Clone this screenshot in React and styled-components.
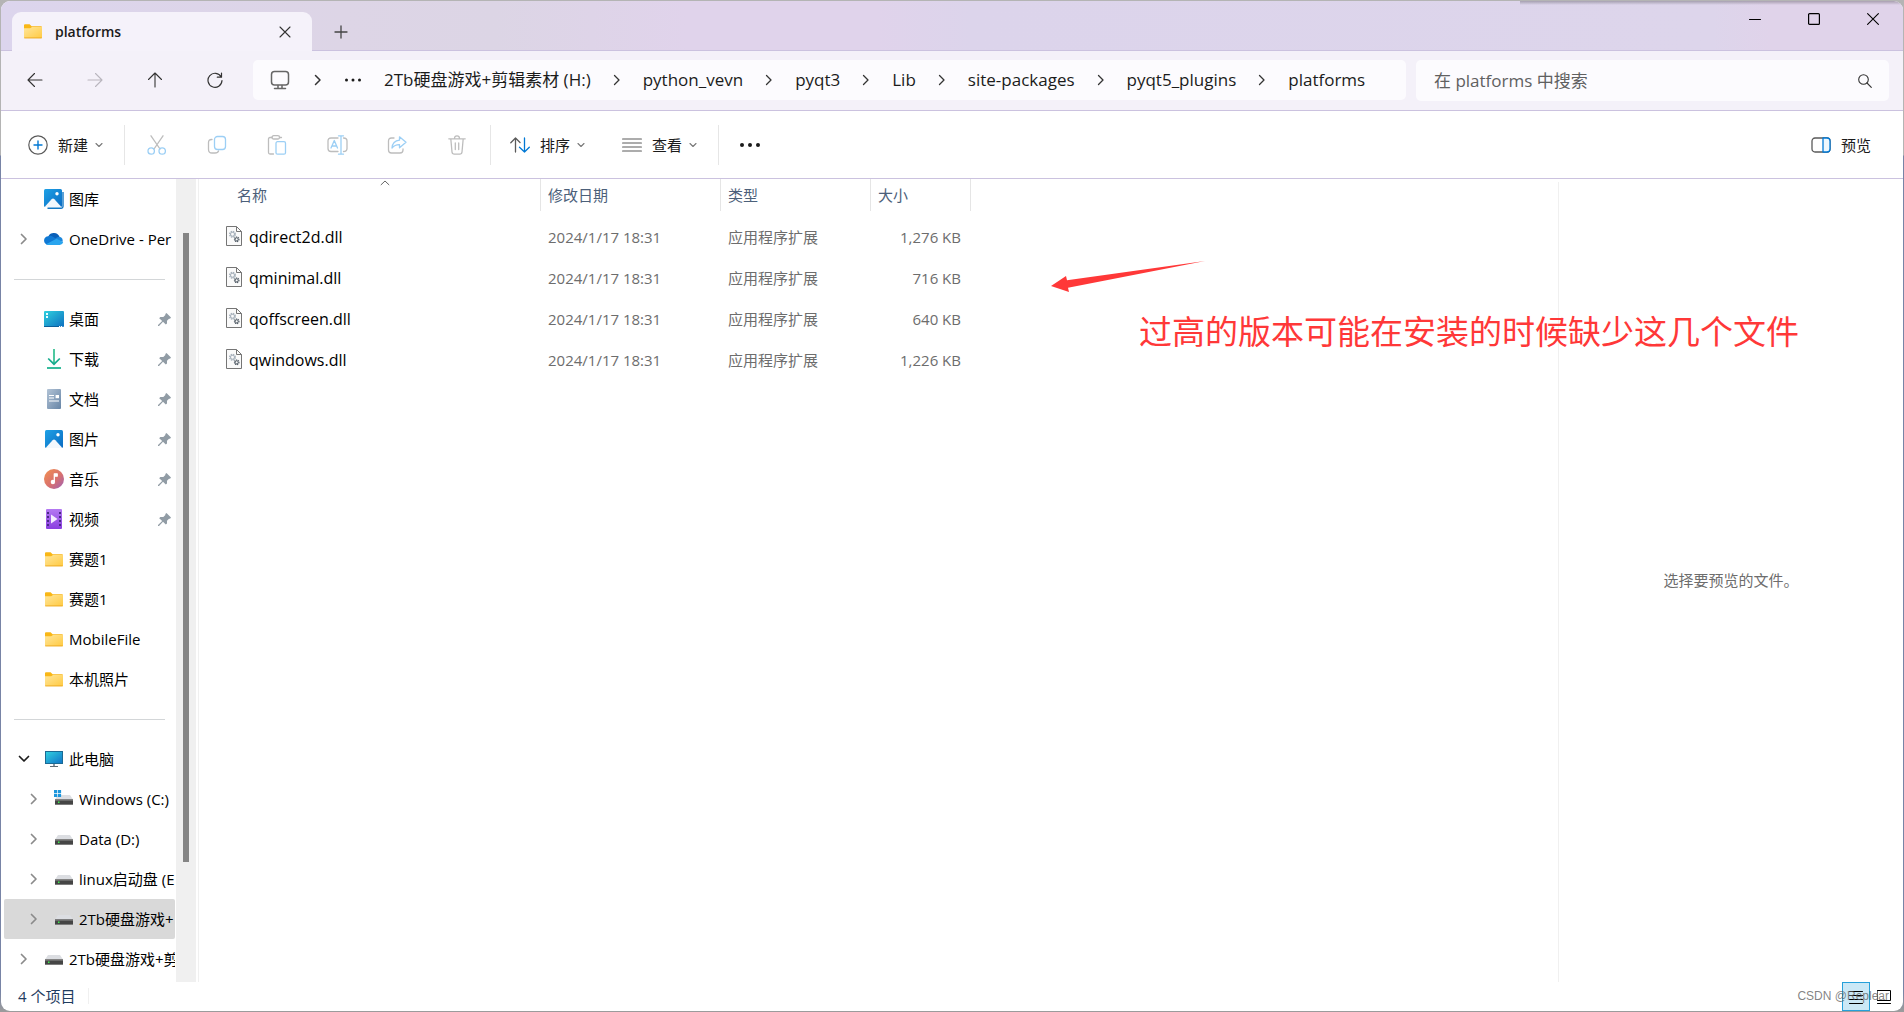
import React from 'react';
import styled, { createGlobalStyle } from 'styled-components';

const GlobalStyle = createGlobalStyle`
  * {
    box-sizing: border-box;
  }
  body {
    margin: 0;
    background: linear-gradient(#b4b4b4 0, #b4b4b4 155px, #7884a6 156px, #7884a6 98%, #9c9c9c 100%);
    font-family: "Open Sans", "Noto Sans CJK SC", sans-serif;
    font-size: 15px;
    line-height: 20px;
    color: #1b1b1b;
  }
  button {
    border: 0;
    padding: 0;
    background: none;
    font: inherit;
    color: inherit;
  }
  a {
    color: inherit;
    text-decoration: none;
  }
  svg {
    display: block;
    flex: none;
  }
`;

const Frame = styled.div`
  min-height: 100vh;
  display: flex;
  padding: 1px;
`;

const Window = styled.div`
  position: relative;
  flex: 1;
  min-width: 0;
  display: flex;
  flex-direction: column;
  background: #fff;
  border-radius: 9px;
  overflow: hidden;
`;

/* ---------- title bar ---------- */

const TitleBar = styled.header`
  display: flex;
  height: 50px;
  padding: 0 1px 0 11px;
  border-bottom: 1px solid #cbc2df;
  background:
    linear-gradient(rgba(0, 0, 0, 0.25), transparent) right top / 383px 4px no-repeat,
    linear-gradient(90deg, #dcd5ed 0%, #ddd5e6 18%, #dcd5e5 26%, #e0d3eb 36%, #e0d3eb 46%, #dcd4eb 51%, #ddd5eb 90%, #e0d3ea 93%);
`;

const Tab = styled.div`
  display: flex;
  align-items: center;
  width: 300px;
  height: 39px;
  margin-top: 11px;
  padding: 0 20px 0 12px;
  border-radius: 9px 9px 0 0;
  background: #f5f2fa;
`;

const TabTitle = styled.span`
  flex: 1;
  margin-left: 13px;
  font-size: 14px;
  font-weight: 600;
`;

const NewTab = styled.button`
  display: flex;
  margin: 24px 0 0 22px;
  height: 14px;
`;

const WindowButtons = styled.div`
  display: flex;
  margin-left: auto;
`;

const WindowButton = styled.button`
  display: flex;
  align-items: center;
  justify-content: center;
  width: 59px;
  height: 36px;
`;

/* ---------- navigation row ---------- */

const NavBar = styled.nav`
  display: flex;
  height: 60px;
  padding: 9px 14px 0 4px;
  background: #f4f1f9;
  border-bottom: 1px solid #cbc2df;
`;

const NavButton = styled.button`
  display: flex;
  align-items: center;
  justify-content: center;
  width: 60px;
  height: 40px;
  color: ${(p) => (p.disabled ? '#b9b6be' : '#333')};
`;

const Address = styled.div`
  flex: 1;
  display: flex;
  align-items: center;
  height: 40px;
  margin: 0 10px 0 8px;
  padding-left: 17px;
  border-radius: 5px;
  background: #fcfbfe;
  font-size: 17px;
  white-space: nowrap;
`;

const CrumbArrow = styled.span`
  display: flex;
  justify-content: center;
  width: 52px;
`;

const MoreCrumbs = styled.button`
  display: flex;
  margin-right: 22px;
`;

const SearchBox = styled.label`
  flex: 0 1 calc(25% + 2px);
  display: flex;
  align-items: center;
  height: 41px;
  padding: 0 17px 0 18px;
  border-radius: 5px;
  background: #fcfbfe;
`;

const SearchInput = styled.input`
  flex: 1;
  min-width: 0;
  padding: 0;
  border: 0;
  outline: 0;
  background: none;
  font: inherit;
  font-size: 17px;
  &::placeholder {
    color: #606060;
    opacity: 1;
  }
`;

/* ---------- command bar ---------- */

const CommandBar = styled.div`
  display: flex;
  align-items: center;
  height: 68px;
  padding: 0 32px 0 27px;
  border-bottom: 1px solid #cbc2df;
`;

const Command = styled.button`
  display: flex;
  align-items: center;
  gap: 10px;
`;

const CommandLabel = styled.span`
  margin-right: -3px;
`;

const CommandGroup = styled.div`
  display: flex;
  gap: 37px;
`;

const Separator = styled.span`
  width: 1px;
  height: 40px;
  margin: 0 ${(p) => p.$right}px 0 ${(p) => p.$left}px;
  background: #e6e6e6;
`;

const IconCommand = styled.button`
  display: flex;
  justify-content: center;
  width: 60px;
`;

const Spacer = styled.span`
  flex: 1;
`;

/* ---------- body ---------- */

const Body = styled.div`
  flex: 1;
  display: flex;
`;

const Sidebar = styled.aside`
  display: flex;
  width: 198px;
  border-right: 1px solid #f0f0f0;
`;

const Tree = styled.div`
  width: 175px;
  padding-right: 1px;
  overflow: hidden;
`;

const TreeRow = styled.a`
  display: flex;
  align-items: center;
  height: 40px;
  margin-left: 3px;
  padding-left: ${(p) => (p.$nested ? 22 : 12)}px;
  border-radius: 2px;
  color: #000;
  background: ${(p) => (p.$selected ? '#d9d9d9' : 'none')};
`;

const TreeArrow = styled.span`
  display: flex;
  justify-content: center;
  width: 15px;
  margin-right: 13px;
`;

const TreeIcon = styled.span`
  display: flex;
  justify-content: center;
  width: 20px;
  margin-right: 5px;
`;

const TreeLabel = styled.span`
  flex: 1;
  min-width: 0;
  overflow: hidden;
  white-space: nowrap;
`;

const PinSlot = styled.span`
  margin-right: 4px;
`;

const TreeDivider = styled.hr`
  height: 1px;
  margin: 20px 10px 19px 13px;
  border: 0;
  background: #d3d6d8;
`;

const ScrollTrack = styled.div`
  width: 20px;
  padding: 54px 7px 0;
  background: #f0f0f0;
`;

const ScrollThumb = styled.div`
  height: 84%;
  background: #858585;
`;

const Files = styled.main`
  position: relative;
  flex: 1;
`;

const FileTable = styled.table`
  width: 772px;
  table-layout: fixed;
  border-collapse: collapse;
`;

const HeadTh = styled.th`
  width: ${(p) => p.$width}px;
  padding: 0 0 5px;
  font-weight: 400;
  text-align: left;
`;

const HeadCell = styled.div`
  position: relative;
  height: 32px;
  margin-left: ${(p) => p.$indent || 0}px;
  padding: 6px 7px;
  border-right: 1px solid #e5e5e5;
  color: #4c607a;
`;

const SortMark = styled.svg`
  position: absolute;
  top: 1px;
  left: 50%;
  margin-left: -5px;
`;

const Cell = styled.td`
  height: 41px;
  padding: 0 10px 0 7px;
  color: #6d6d6d;
  text-align: ${(p) => p.$align || 'left'};
`;

const FileName = styled.a`
  display: flex;
  align-items: center;
  gap: 7px;
  margin-left: 20px;
  font-size: 16px;
  color: #000;
`;

const Note = styled.p`
  position: absolute;
  top: 133px;
  left: 940px;
  margin: 0;
  font-size: 33px;
  line-height: 40px;
  white-space: nowrap;
  color: #ff3838;
`;

const NoteArrow = styled.svg`
  position: absolute;
  top: 81px;
  left: 851px;
`;

const Preview = styled.section`
  display: flex;
  align-items: center;
  justify-content: center;
  width: 345px;
  margin-top: 3px;
  padding-bottom: 4px;
  border-left: 1px solid #f0f0f0;
  color: #6d6d6d;
`;

const StatusBar = styled.footer`
  display: flex;
  height: 29px;
  padding: 0 5px 0 17px;
  color: #1f3c5f;
`;

const StatusCount = styled.span`
  height: 16px;
  margin-top: 6px;
  padding-right: 13px;
  border-right: 1px solid #f0f0f0;
  line-height: 16px;
`;

const ViewButton = styled.button`
  display: flex;
  align-items: center;
  justify-content: center;
  width: 28px;
  height: 29px;
  border: 1px solid ${(p) => (p.$active ? '#26a0da' : 'transparent')};
  background: ${(p) => (p.$active ? '#cbe8f6' : 'none')};
`;

const Watermark = styled.span`
  position: absolute;
  right: 14px;
  bottom: 5px;
  font-family: "Liberation Sans", sans-serif;
  font-size: 12px;
  color: rgba(90, 90, 90, 0.75);
`;

/* ---------- icons ---------- */

const Stroke = ({ w = 20, h = 20, color = 'currentColor', width = 1.3, d, children }) => (
  <svg width={w} height={h} viewBox={`0 0 ${w} ${h}`} fill="none" stroke={color} strokeWidth={width} strokeLinecap="round" strokeLinejoin="round">
    {d && <path d={d} />}
    {children}
  </svg>
);

const ChevronRight = ({ color = '#8b8b8b', width = 1.7 }) => (
  <Stroke w={8} h={12} color={color} width={width} d="M1.5 1.5 6 6 1.5 10.5" />
);
const ChevronDown = () => <Stroke w={8} h={6} color="#777" width={1.1} d="M1 1.5 4 4.5 7 1.5" />;

const FolderIcon = () => (
  <svg width="18" height="15" viewBox="0 0 18 15">
    <defs>
      <linearGradient id="folder" x1="0" y1="0" x2="1" y2="1">
        <stop offset="0" stopColor="#ffe69b" />
        <stop offset="1" stopColor="#ffca42" />
      </linearGradient>
    </defs>
    <path d="M0 1.2Q0 .3 1 .3H5.6L7.6 2.2H17Q18 2.2 18 3.2V8H0Z" fill="#f9b716" />
    <path d="M0 4.2H6.2L8 3H18V13.4Q18 14.2 17 14.2H1Q0 14.2 0 13.4Z" fill="url(#folder)" />
    <path d="M.2 13.9H17.8" stroke="#eba41c" strokeWidth=".8" />
  </svg>
);

const PictureShape = () => (
  <>
    <defs>
      <linearGradient id="pic" x1="0" y1="0" x2="1" y2="1">
        <stop offset="0" stopColor="#1ea1e6" />
        <stop offset="1" stopColor="#0b6bc2" />
      </linearGradient>
    </defs>
    <rect width="18" height="18" rx="1.5" fill="url(#pic)" />
    <path d="M1 17.5 7.6 10.2Q9 8.8 10.4 10.2L17 17.5Q16.7 18 16 18H2Q1.2 18 1 17.5Z" fill="#f3f8fd" />
    <circle cx="13" cy="4.8" r="1.7" fill="#fff" />
  </>
);

const PictureIcon = () => (
  <svg width="18" height="18" viewBox="0 0 18 18"><PictureShape /></svg>
);

const GalleryIcon = () => (
  <svg width="20" height="20" viewBox="0 0 20 20">
    <path d="M19 3V17.5Q19 19.2 17.3 19.2H3.5" fill="none" stroke="#1478c4" strokeWidth="1.4" />
    <PictureShape />
  </svg>
);

const CloudIcon = () => (
  <svg width="20" height="14" viewBox="0 0 20 14">
    <path d="M4.4 4.2A6 5.6 0 0 1 15.4 4.8L13 9H4Z" fill="#0a5fb8" />
    <path d="M4.3 4.3Q6.6 3.2 9 4.8L14 8 6 12.8H4.3A4.2 4.2 0 0 1 4.3 4.3Z" fill="#1079d4" />
    <path d="M10.8 7.3Q12.6 4.5 15.6 4.7A4.4 4.4 0 0 1 18.5 10Z" fill="#1a86dc" />
    <path d="M2 12.2 11.5 7.2Q13 6.8 14.5 7.8L19.2 10.3Q18.4 13 15.8 13H4.3Q3 13 2 12.2Z" fill="#2aa5ee" />
  </svg>
);

const DesktopIcon = () => (
  <svg width="20" height="16" viewBox="0 0 20 16">
    <defs>
      <linearGradient id="desk" x1="0" y1="0" x2="1" y2="1">
        <stop offset="0" stopColor="#2fd0de" />
        <stop offset="1" stopColor="#0d6fc0" />
      </linearGradient>
    </defs>
    <rect width="20" height="16" rx="1" fill="url(#desk)" />
    <path d="M2 2h2v2H2zM2 5h2v2H2z" fill="#eaffff" />
    <path d="M0 15h15v1H0z" fill="#0b5f9a" />
    <path d="M15 15h1.2v1H15zM17 15h1.2v1H17z" fill="#fff" />
  </svg>
);

const DownloadIcon = () => (
  <svg width="14" height="20" viewBox="0 0 14 20" fill="none" strokeWidth="1.7">
    <path d="M7 0V15" stroke="#2fbf8f" />
    <path d="M1.2 9.5 7 15.2 12.8 9.5" stroke="#16ab8e" />
    <path d="M0 19H14" stroke="#14b08c" />
  </svg>
);

const DocumentIcon = () => (
  <svg width="14" height="20" viewBox="0 0 14 20">
    <defs>
      <linearGradient id="docu" x1="0" y1="0" x2="1" y2="1">
        <stop offset="0" stopColor="#b2c3d6" />
        <stop offset="1" stopColor="#6785a6" />
      </linearGradient>
    </defs>
    <rect width="14" height="20" rx="1" fill="url(#docu)" />
    <path d="M2 6.5H7M2 9H7M2 12H12M9 7.5H12" stroke="#fff" strokeWidth="1.2" />
    <path d="M8.6 6h3.4v3.2H8.6z" fill="#fff" />
  </svg>
);

const MusicIcon = () => (
  <svg width="20" height="20" viewBox="0 0 20 20">
    <defs>
      <linearGradient id="music" x1="0" y1="0" x2="1" y2="1">
        <stop offset="0" stopColor="#f2914f" />
        <stop offset=".55" stopColor="#d9716e" />
        <stop offset="1" stopColor="#9c5fb8" />
      </linearGradient>
    </defs>
    <circle cx="10" cy="10" r="10" fill="url(#music)" />
    <path d="M10.300 12.8V4.8H13.2V7.2H10.300" fill="#fff" stroke="#fff" strokeWidth="1.3" strokeLinejoin="round" />
    <circle cx="8.900" cy="13" r="2.2" fill="#fff" />
  </svg>
);

const VideoIcon = () => (
  <svg width="16" height="20" viewBox="0 0 16 20">
    <defs>
      <linearGradient id="video" x1="0" y1="0" x2="0" y2="1">
        <stop offset="0" stopColor="#b479f2" />
        <stop offset="1" stopColor="#8a3fe0" />
      </linearGradient>
    </defs>
    <rect width="16" height="20" rx="1" fill="url(#video)" />
    <path d="M2 3V18M14 3V18" stroke="#4a2a86" strokeWidth="2" strokeDasharray="2 2" />
    <path d="M5 5.5 11.5 10 5 14.5Z" fill="#f4ecff" />
  </svg>
);

const PcIcon = () => (
  <svg width="18" height="16" viewBox="0 0 18 16">
    <defs>
      <linearGradient id="pc" x1="0" y1="0" x2="1" y2="1">
        <stop offset="0" stopColor="#31d2e0" />
        <stop offset="1" stopColor="#1173c8" />
      </linearGradient>
    </defs>
    <rect x=".5" y=".5" width="17" height="12" fill="url(#pc)" stroke="#1b6a94" />
    <path d="M8 13h2v2H8z" fill="#8a99a5" />
    <path d="M5 15h8v1H5z" fill="#5f6a72" />
  </svg>
);

const DriveIcon = ({ system }) => (
  <svg width="20" height="18" viewBox="0 0 20 18">
    <path d="M4 5H16L19 9.500H1Z" fill="#dcdee2" />
    <path d="M1 9.500H19V15H1Z" fill="#454545" />
    <path d="M1 9.500H19V11H1Z" fill="#6b6b6b" />
    <path d="M1 14.2H19V15H1Z" fill="#8a8a8a" />
    <path d="M4 11.500h1.500v1.500H4z" fill="#3df24a" />
    {system && <path d="M0 0h3.200v3.200H0zM3.900 0h3.200v3.200H3.900zM0 3.900h3.200v3.200H0zM3.900 3.900h3.200v3.200H3.900z" fill="#1d96dc" />}
  </svg>
);

const PinIcon = () => (
  <svg width="13" height="13" viewBox="0 0 13 13">
    <path d="M8.5 0 13 4.5 12 5.7 11 5.7 9 7.7 9 10.6 7.8 11.5 5 8.7 1 13 0 13 0 12 4.2 7.9 1.2 5.2 2.3 4 5.3 4 7.4 2 7.3 1Z" fill="#919ca5" />
  </svg>
);

const DllIcon = () => (
  <svg width="16" height="22" viewBox="0 0 16 22" fill="none">
    <path d="M.5.5H10.5L15.5 5.5V19.5H.5Z" fill="#fafafa" stroke="#757575" />
    <path d="M10.5.5V5.5H15.5" stroke="#757575" />
    <circle cx="6.5" cy="8.3" r="2.9" stroke="#a9b3bd" strokeWidth="1.2" strokeDasharray="1.5 .78" />
    <circle cx="6.5" cy="8.3" r="2" stroke="#a9b3bd" strokeWidth="1.1" />
    <circle cx="10.7" cy="13.3" r="2.3" stroke="#56606a" strokeWidth="1.1" strokeDasharray="1.2 .6" />
    <circle cx="10.7" cy="13.3" r="1.5" stroke="#56606a" />
  </svg>
);

const gray = '#bdbdbd';
const blue = '#9ccff5';

const CutIcon = () => (
  <Stroke color={gray}>
    <path d="M4 .8 13 14M16 .8 7 14" />
    <circle cx="4.2" cy="16" r="3.2" stroke={blue} />
    <circle cx="15.2" cy="16" r="3.2" stroke={blue} />
  </Stroke>
);

const CopyIcon = () => (
  <Stroke color={gray}>
    <path d="M5 4.5H4.5Q1.5 4.5 1.5 7.5V14.5Q1.5 18 5 18H8Q11 18 11.5 16" />
    <rect x="7.5" y="1.5" width="11" height="13" rx="3" stroke={blue} />
  </Stroke>
);

const PasteIcon = () => (
  <Stroke color={gray}>
    <path d="M5 2.5H3Q1.5 2.5 1.5 4V17.5Q1.5 19 3 19H6.5M12.5 2.5H14.5" />
    <rect x="5" y=".7" width="7.5" height="3.3" rx="1.6" />
    <rect x="9" y="6.7" width="9.5" height="12.5" rx="1.5" stroke={blue} />
  </Stroke>
);

const RenameIcon = () => (
  <Stroke w={21} color={gray}>
    <path d="M11 3H4Q1 3 1 6V13.5Q1 16.5 4 16.5H11M16.5 3Q20 3 20 6V13.5Q20 16.5 16.5 16.5" />
    <path d="M4 13 7.3 5.5 10.5 13M5 11H9.5M11.5 .8H16.5M14 .8V19.2M11.5 19.2H16.5" stroke={blue} />
  </Stroke>
);

const ShareIcon = () => (
  <Stroke color={gray}>
    <path d="M7 3H4.5Q1.5 3 1.5 6V15Q1.5 18 4.5 18H13Q16 18 16 15V14" />
    <path d="M12.5 1.8 19 7.3 12.5 12.8V9.6Q8 9.4 5 13Q5.5 6 12.5 5.2Z" stroke={blue} />
  </Stroke>
);

const TrashIcon = () => (
  <Stroke w={18} color={gray} d="M.8 3.8H17.2M2.8 3.8 4 17Q4.2 19.2 6.3 19.2H11.7Q13.8 19.2 14 17L15.2 3.8M6.5 3.5Q6.5 .8 9 .8T11.5 3.5M7.3 8V14.5M10.7 8V14.5" />
);

const Dots = ({ w, r }) => (
  <svg width={w} height="6" viewBox={`0 0 ${w} 6`} fill="#1b1b1b">
    <circle cx={r + 1} cy="3" r={r} />
    <circle cx={w / 2} cy="3" r={r} />
    <circle cx={w - r - 1} cy="3" r={r} />
  </svg>
);

/* ---------- data ---------- */

const crumbs = ['2Tb硬盘游戏+剪辑素材 (H:)', 'python_vevn', 'pyqt3', 'Lib', 'site-packages', 'pyqt5_plugins', 'platforms'];

const tree = [
  { label: '图库', icon: <GalleryIcon /> },
  { label: 'OneDrive - Per', icon: <CloudIcon />, arrow: true },
  { divider: true },
  { label: '桌面', icon: <DesktopIcon />, pinned: true },
  { label: '下载', icon: <DownloadIcon />, pinned: true },
  { label: '文档', icon: <DocumentIcon />, pinned: true },
  { label: '图片', icon: <PictureIcon />, pinned: true },
  { label: '音乐', icon: <MusicIcon />, pinned: true },
  { label: '视频', icon: <VideoIcon />, pinned: true },
  { label: '赛题1', icon: <FolderIcon /> },
  { label: '赛题1', icon: <FolderIcon /> },
  { label: 'MobileFile', icon: <FolderIcon /> },
  { label: '本机照片', icon: <FolderIcon /> },
  { divider: true },
  { label: '此电脑', icon: <PcIcon />, open: true },
  { label: 'Windows (C:)', icon: <DriveIcon system />, arrow: true, nested: true },
  { label: 'Data (D:)', icon: <DriveIcon />, arrow: true, nested: true },
  { label: 'linux启动盘 (E', icon: <DriveIcon />, arrow: true, nested: true },
  { label: '2Tb硬盘游戏+', icon: <DriveIcon />, arrow: true, nested: true, selected: true },
  { label: '2Tb硬盘游戏+剪', icon: <DriveIcon />, arrow: true },
];

const files = [
  { name: 'qdirect2d.dll', size: '1,276 KB' },
  { name: 'qminimal.dll', size: '716 KB' },
  { name: 'qoffscreen.dll', size: '640 KB' },
  { name: 'qwindows.dll', size: '1,226 KB' },
];

const App = () => {
  return (
    <Frame>
      <GlobalStyle />
      <Window>
        <TitleBar>
          <Tab>
            <FolderIcon />
            <TabTitle>platforms</TabTitle>
            <button aria-label="关闭标签页">
              <Stroke w={14} h={14} color="#333" width={1.1} d="M2 2 12 12M12 2 2 12" />
            </button>
          </Tab>
          <NewTab aria-label="新标签页">
            <Stroke w={14} h={14} color="#444" d="M7 1V13M1 7H13" />
          </NewTab>
          <WindowButtons>
            <WindowButton aria-label="最小化">
              <Stroke w={12} h={12} color="#000" width={1} d="M.5 6.5H11.5" />
            </WindowButton>
            <WindowButton aria-label="最大化">
              <Stroke w={12} h={12} color="#000" width={1.2}>
                <rect x=".6" y=".6" width="10.8" height="10.8" rx="1" />
              </Stroke>
            </WindowButton>
            <WindowButton aria-label="关闭">
              <Stroke w={12} h={12} color="#000" width={1.1} d="M.6 .6 11.4 11.4M11.4 .6 .6 11.4" />
            </WindowButton>
          </WindowButtons>
        </TitleBar>

        <NavBar>
          <NavButton aria-label="后退">
            <Stroke w={16} h={16} width={1.1} d="M15 8H1M7.5 1.5 1 8 7.5 14.5" />
          </NavButton>
          <NavButton aria-label="前进" disabled>
            <Stroke w={16} h={16} width={1.1} d="M1 8H15M8.5 1.5 15 8 8.5 14.5" />
          </NavButton>
          <NavButton aria-label="向上">
            <Stroke w={16} h={16} width={1.1} d="M8 15V1M1.5 7.5 8 1 14.5 7.5" />
          </NavButton>
          <NavButton aria-label="刷新">
            <Stroke w={16} h={16} width={1.2} d="M14.2 5A7 7 0 1 0 15 8.5M14.5 1V5.2H10.3" />
          </NavButton>
          <Address>
            <Stroke w={22} h={20} color="#666" width={1.5}>
              <rect x="1.5" y="1.5" width="17" height="13.5" rx="3" />
              <path d="M8 15.5V18M12 15.5V18M4.5 18.5H15.5" />
            </Stroke>
            <CrumbArrow><ChevronRight color="#333" width={1.5} /></CrumbArrow>
            <MoreCrumbs aria-label="更多"><Dots w={18} r={1.5} /></MoreCrumbs>
            {crumbs.map((crumb, i) => (
              <React.Fragment key={crumb}>
                {i > 0 && <CrumbArrow><ChevronRight color="#333" width={1.3} /></CrumbArrow>}
                <a href="#">{crumb}</a>
              </React.Fragment>
            ))}
          </Address>
          <SearchBox>
            <SearchInput type="text" aria-label="搜索" placeholder="在 platforms 中搜索" />
            <Stroke w={14} h={14} color="#333" width={1.1}>
              <circle cx="5.5" cy="5.5" r="4.8" />
              <path d="M9 9 13.3 13.3" />
            </Stroke>
          </SearchBox>
        </NavBar>

        <CommandBar>
          <Command>
            <Stroke color="#5a5a5a" width={1.2}>
              <circle cx="10" cy="10" r="9.2" />
              <path d="M10 6V14M6 10H14" stroke="#0078d4" strokeWidth="1.4" />
            </Stroke>
            <CommandLabel>新建</CommandLabel>
            <ChevronDown />
          </Command>
          <Separator $left={21} $right={2} />
          <IconCommand aria-label="剪切"><CutIcon /></IconCommand>
          <IconCommand aria-label="复制"><CopyIcon /></IconCommand>
          <IconCommand aria-label="粘贴"><PasteIcon /></IconCommand>
          <IconCommand aria-label="重命名"><RenameIcon /></IconCommand>
          <IconCommand aria-label="共享"><ShareIcon /></IconCommand>
          <IconCommand aria-label="删除"><TrashIcon /></IconCommand>
          <Separator $left={3} $right={19} />
          <CommandGroup>
            <Command>
              <Stroke h={16} color="#5a5a5a">
                <path d="M5.5 15V1M.8 5.7 5.5 1 10 5.5" />
                <path d="M14.5 1V15M9.5 10.3 14.5 15 19.3 10.3" stroke="#0078d4" />
              </Stroke>
              <CommandLabel>排序</CommandLabel>
              <ChevronDown />
            </Command>
            <Command>
              <Stroke h={14} color="#5a5a5a" width={1.2} d="M.6 1H19.4M.6 5H19.4M.6 9H19.4M.6 13H19.4" />
              <CommandLabel>查看</CommandLabel>
              <ChevronDown />
            </Command>
          </CommandGroup>
          <Separator $left={21} $right={20} />
          <button aria-label="查看更多"><Dots w={22} r={2} /></button>
          <Spacer />
          <Command>
            <Stroke h={16} color="#5a5a5a">
              <rect x="1" y="1" width="18" height="14" rx="3" />
              <path d="M12 1H16Q19 1 19 4V12Q19 15 16 15H12Z" stroke="#0078d4" fill="#eef7fd" />
            </Stroke>
            <span>预览</span>
          </Command>
        </CommandBar>

        <Body>
          <Sidebar>
            <Tree>
              {tree.map((item, i) =>
                item.divider ? (
                  <TreeDivider key={i} />
                ) : (
                  <TreeRow key={i} href="#" $nested={item.nested} $selected={item.selected}>
                    <TreeArrow>
                      {item.arrow && <ChevronRight />}
                      {item.open && <Stroke w={12} h={8} color="#1b1b1b" width={1.7} d="M1.5 1.5 6 6 10.5 1.5" />}
                    </TreeArrow>
                    <TreeIcon>{item.icon}</TreeIcon>
                    <TreeLabel>{item.label}</TreeLabel>
                    {item.pinned && <PinSlot><PinIcon /></PinSlot>}
                  </TreeRow>
                )
              )}
            </Tree>
            <ScrollTrack>
              <ScrollThumb />
            </ScrollTrack>
          </Sidebar>

          <Files>
            <FileTable>
              <thead>
                <tr>
                  <HeadTh $width={342}>
                    <HeadCell $indent={31}>
                      名称
                      <SortMark width="10" height="6" viewBox="0 0 10 6" fill="none" stroke="#666">
                        <path d="M.8 5 5 1 9.2 5" />
                      </SortMark>
                    </HeadCell>
                  </HeadTh>
                  <HeadTh $width={180}><HeadCell>修改日期</HeadCell></HeadTh>
                  <HeadTh $width={150}><HeadCell>类型</HeadCell></HeadTh>
                  <HeadTh $width={100}><HeadCell>大小</HeadCell></HeadTh>
                </tr>
              </thead>
              <tbody>
                {files.map((file) => (
                  <tr key={file.name}>
                    <Cell>
                      <FileName href="#"><DllIcon />{file.name}</FileName>
                    </Cell>
                    <Cell>2024/1/17 18:31</Cell>
                    <Cell>应用程序扩展</Cell>
                    <Cell $align="right">{file.size}</Cell>
                  </tr>
                ))}
              </tbody>
            </FileTable>
            <NoteArrow width="158" height="34" viewBox="0 0 158 34" fill="#ff3838">
              <path d="M1 26 16 16 17 20.3 155 1 18 27.7 19 32Z" />
            </NoteArrow>
            <Note>过高的版本可能在安装的时候缺少这几个文件</Note>
          </Files>

          <Preview>选择要预览的文件。</Preview>
        </Body>

        <StatusBar>
          <StatusCount>4 个项目</StatusCount>
          <Spacer />
          <ViewButton $active aria-label="详细信息">
            <Stroke w={14} h={14} color="#000" width={1} d="M.5 1.5H13.5M.5 5.5H13.5M.5 9.5H13.5M.5 13.5H13.5" />
          </ViewButton>
          <ViewButton aria-label="大图标">
            <Stroke w={14} h={14} color="#000" width={1} d="M.5 .5H13.5V10.5H.5ZM.5 13.5H13.5" />
          </ViewButton>
        </StatusBar>
        <Watermark>CSDN @Replear</Watermark>
      </Window>
    </Frame>
  );
};

export default App;
